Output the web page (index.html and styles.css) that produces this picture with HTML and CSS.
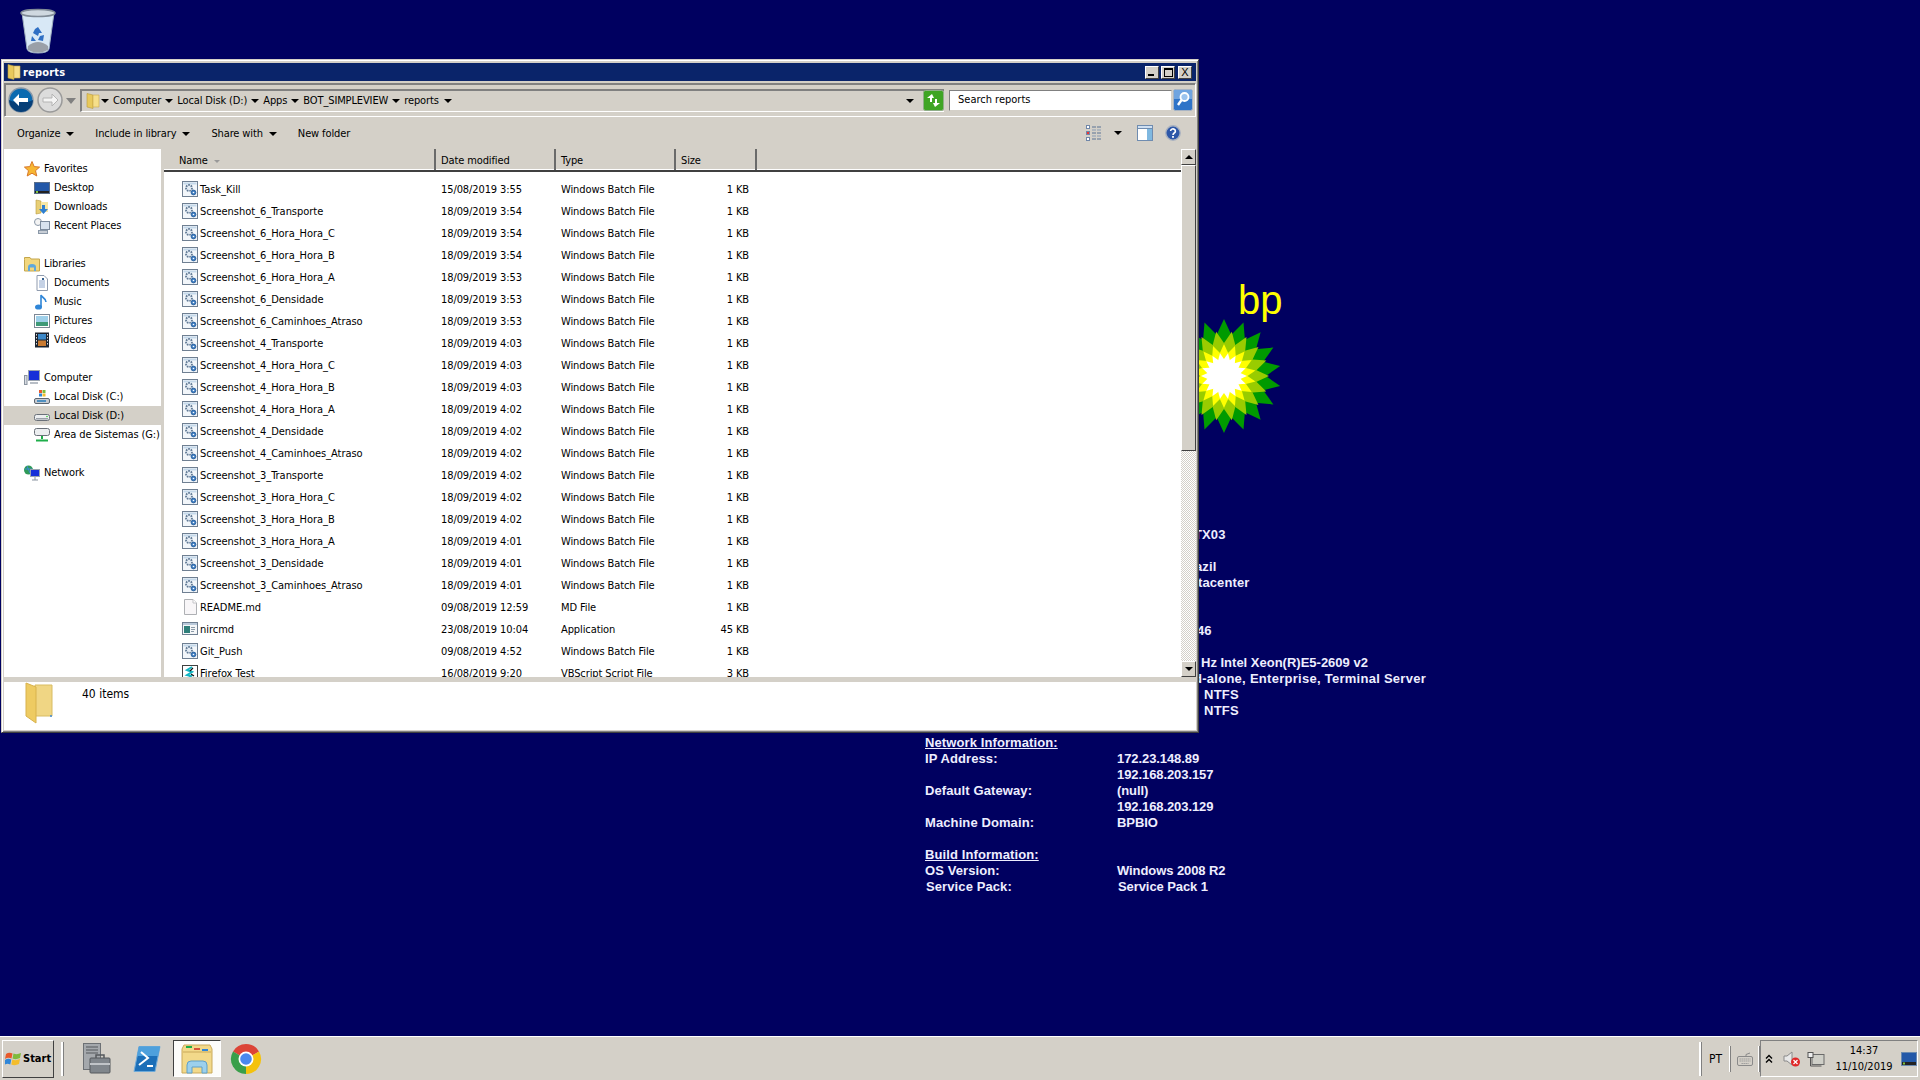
FILE: index.html
```html
<!DOCTYPE html>
<html lang="en">
<head>
    <meta charset="UTF-8">
    <title>reports</title>
    <link rel="stylesheet" href="styles.css">
</head>
<body>
    <svg class="defs" width="0" height="0">
        <defs>
            <symbol id="i-bat" viewBox="0 0 16 16">
                <rect x="0.5" y="0.5" width="15" height="15" fill="#f2f6fa" stroke="#6f7f92"/>
                <rect x="1.5" y="1.5" width="13" height="2" fill="#c4d8ea"/>
                <circle cx="7" cy="7" r="3" fill="#e4ecf4" stroke="#5f7894" stroke-width="1.8" stroke-dasharray="1.6 1"/>
                <circle cx="11.5" cy="11.5" r="2.4" fill="#3d7cc0" stroke="#1f5796" stroke-width="0.8"/>
                <circle cx="11.5" cy="11.5" r="0.8" fill="#fff"/>
            </symbol>
            <symbol id="i-doc" viewBox="0 0 16 16">
                <path d="M2.5 0.5H11L14.5 4V15.5H2.5Z" fill="#f8f6f8" stroke="#aeb0b4"/>
                <path d="M11 0.5V4H14.5" fill="#fff" stroke="#c4c4c8"/>
            </symbol>
            <symbol id="i-exe" viewBox="0 0 16 16">
                <rect x="0.5" y="1.5" width="15" height="12" fill="#f4f6f8" stroke="#6f7f92"/>
                <rect x="1" y="2" width="14" height="2" fill="#b9c9da"/>
                <rect x="2" y="5" width="6" height="7" fill="#2f7f7a"/>
                <path d="M9 6.5h4M9 8.5h4M9 10.5h3" stroke="#8b9aa8"/>
            </symbol>
            <symbol id="i-vbs" viewBox="0 0 16 16">
                <rect x="0.5" y="0.5" width="15" height="15" fill="#fff" stroke="#404040"/>
                <path d="M10 2L5 5l5 2-5 3 4 1-3 3" fill="none" stroke="#12b6c4" stroke-width="2"/>
                <path d="M11 3L8 6M9 9l3 2" stroke="#111" stroke-width="1.2"/>
            </symbol>
            <symbol id="i-folder" viewBox="0 0 16 16">
                <path d="M2 0.5L8 2V15.5L2 14Z" fill="#e8c95c" stroke="#b99b3e" stroke-width="0.6"/>
                <path d="M8 2H14V14H8Z" fill="#f6df8a" stroke="#c9a94a" stroke-width="0.6"/>
            </symbol>
            <symbol id="i-star" viewBox="0 0 16 16">
                <path d="M8 0.5L10.2 5.6 15.6 6.1 11.5 9.7 12.8 15 8 12.2 3.2 15 4.5 9.7 0.4 6.1 5.8 5.6Z" fill="#f7b733" stroke="#d8782a"/>
            </symbol>
            <symbol id="i-desk" viewBox="0 0 16 16">
                <rect x="0.5" y="2.5" width="15" height="11" fill="#2358a8" stroke="#5a6e8a"/>
                <rect x="1" y="11" width="14" height="2" fill="#222"/>
                <rect x="2" y="11" width="2" height="2" fill="#7fc241"/>
            </symbol>
            <symbol id="i-down" viewBox="0 0 16 16">
                <path d="M2 1L7 2V14L2 15Z" fill="#e8cf76" stroke="#b99b3e" stroke-width="0.6"/>
                <path d="M7 3H14V13H7Z" fill="#f6e6a6"/>
                <path d="M8 6H11V10H14L9.5 15 5 10H8Z" fill="#2f7fd0"/>
            </symbol>
            <symbol id="i-recent" viewBox="0 0 16 16">
                <circle cx="4" cy="4" r="3.5" fill="#f4f4f4" stroke="#8a98a8"/>
                <rect x="6.5" y="3.5" width="9" height="8" fill="#d8e2ee" stroke="#7c8a9c"/>
                <rect x="4.5" y="12.5" width="9" height="3" fill="#c8ced6" stroke="#8a98a8"/>
            </symbol>
            <symbol id="i-lib" viewBox="0 0 16 16">
                <path d="M0.5 3.5V1.5H6L7 3H15.5V15H0.5Z" fill="#f2d77e" stroke="#c4a64c"/>
                <path d="M4 15V11Q4 8 8 8T12 11V15H10V11.5H6V15Z" fill="#5fa8dc"/>
            </symbol>
            <symbol id="i-docs" viewBox="0 0 16 16">
                <path d="M3 0.5H10L13.5 4V15.5H3Z" fill="#fff" stroke="#8f9bae"/>
                <path d="M5 6h6M5 8h6M5 10h6M5 12h6" stroke="#8aa4cc"/>
                <rect x="8" y="3" width="2" height="2" fill="#35608f"/>
            </symbol>
            <symbol id="i-music" viewBox="0 0 16 16">
                <ellipse cx="4.5" cy="13" rx="3.5" ry="2.6" fill="#2f86d8"/>
                <path d="M7 13V1C8 4 12 4 12 8" fill="none" stroke="#2f86d8" stroke-width="1.6"/>
            </symbol>
            <symbol id="i-pics" viewBox="0 0 16 16">
                <rect x="0.5" y="1.5" width="15" height="13" fill="#fff" stroke="#7d8896"/>
                <rect x="2" y="3" width="12" height="6" fill="#9fd0ea"/>
                <rect x="2" y="9" width="12" height="4" fill="#3f9a78"/>
            </symbol>
            <symbol id="i-video" viewBox="0 0 16 16">
                <rect x="1" y="0.5" width="14" height="15" fill="#1c2430"/>
                <rect x="4" y="2" width="8" height="5.5" fill="#3c88c8"/>
                <rect x="4" y="8.5" width="8" height="5.5" fill="#c97a30"/>
                <path d="M2.5 2v12M13.5 2v12" stroke="#ddd" stroke-dasharray="1.5 1.5"/>
            </symbol>
            <symbol id="i-comp" viewBox="0 0 16 16">
                <rect x="4.5" y="0.5" width="11" height="10" fill="#1730d8" stroke="#9aa4b0"/>
                <path d="M6 12h8v2H6Z" fill="#b8bec6"/>
                <rect x="0.5" y="5.5" width="2.5" height="9" fill="#d8dce2" stroke="#8a94a0"/>
            </symbol>
            <symbol id="i-diskc" viewBox="0 0 16 16">
                <rect x="0.5" y="9.5" width="15" height="5" rx="1.5" fill="#c8ccd2" stroke="#5d6670"/>
                <rect x="3" y="11" width="9" height="2" fill="#4f8fbf"/>
                <rect x="5" y="1" width="3" height="3" fill="#e8592b"/>
                <rect x="8.5" y="1" width="3" height="3" fill="#7fba3c"/>
                <rect x="5" y="4.5" width="3" height="3" fill="#2f86d8"/>
                <rect x="8.5" y="4.5" width="3" height="3" fill="#f4bd2c"/>
            </symbol>
            <symbol id="i-diskd" viewBox="0 0 16 16">
                <rect x="0.5" y="6.5" width="15" height="6" rx="2" fill="#eceef0" stroke="#6a7078"/>
                <rect x="2" y="10" width="12" height="1.5" fill="#9aa0a8"/>
                <circle cx="13" cy="8.5" r="0.8" fill="#3c3"/>
            </symbol>
            <symbol id="i-diskg" viewBox="0 0 16 16">
                <rect x="0.5" y="1.5" width="15" height="7" rx="2" fill="#eceef0" stroke="#6a7078"/>
                <path d="M8 9v3M2 13.5h12" stroke="#1fae4a" stroke-width="2"/>
            </symbol>
            <symbol id="i-net" viewBox="0 0 16 16">
                <circle cx="4.5" cy="5" r="4.5" fill="#2f9a58"/>
                <path d="M1 4h7M3 1l3 7" stroke="#3c88d8"/>
                <rect x="6.5" y="4.5" width="9" height="7" fill="#1730d8" stroke="#9aa4b0"/>
                <path d="M11 12v3M8 15h6" stroke="#8a94a0"/>
            </symbol>
            <polygon id="bp-petal" points="0,-1 0.22,-0.52 0,0 -0.22,-0.52"/>
            <g id="bp-ring">
                <use href="#bp-petal"/>
                <use href="#bp-petal" transform="rotate(20)"/>
                <use href="#bp-petal" transform="rotate(40)"/>
                <use href="#bp-petal" transform="rotate(60)"/>
                <use href="#bp-petal" transform="rotate(80)"/>
                <use href="#bp-petal" transform="rotate(100)"/>
                <use href="#bp-petal" transform="rotate(120)"/>
                <use href="#bp-petal" transform="rotate(140)"/>
                <use href="#bp-petal" transform="rotate(160)"/>
                <use href="#bp-petal" transform="rotate(180)"/>
                <use href="#bp-petal" transform="rotate(200)"/>
                <use href="#bp-petal" transform="rotate(220)"/>
                <use href="#bp-petal" transform="rotate(240)"/>
                <use href="#bp-petal" transform="rotate(260)"/>
                <use href="#bp-petal" transform="rotate(280)"/>
                <use href="#bp-petal" transform="rotate(300)"/>
                <use href="#bp-petal" transform="rotate(320)"/>
                <use href="#bp-petal" transform="rotate(340)"/>
            </g>
        </defs>
    </svg>

    <div class="desktop">
        <!-- recycle bin -->
        <svg class="recycle" viewBox="0 0 36 46">
            <path d="M2 5L7 41Q8 45 18 45T29 41L34 5Z" fill="#d8e8f6" stroke="#9fb0c0"/>
            <ellipse cx="18" cy="5" rx="17" ry="3.5" fill="#cfd8e0" stroke="#7f8a96" stroke-width="1.5"/>
            <path d="M8 38Q18 30 28 38L28 42Q18 47 8 42Z" fill="#9aa0a8"/>
            <path d="M18 19l4 6h-3l-1 3-5-3 2-4zM24 27l-1 6-5-1 2-4zM12 28l4 5-5 0z" fill="#2f6fc4"/>
        </svg>

        <!-- bp logo -->
        <div class="bp-word">bp</div>
        <svg class="bp-logo" viewBox="-60 -60 120 120">
            <use href="#bp-ring" transform="scale(57)" fill="#009a00"/>
            <use href="#bp-ring" transform="rotate(10) scale(45)" fill="#99cc00"/>
            <use href="#bp-ring" transform="scale(32)" fill="#ffff00"/>
            <use href="#bp-ring" transform="rotate(10) scale(23)" fill="#ffffff"/>
            <circle r="11" fill="#ffffff"/>
        </svg>

        <!-- bginfo text, right column sticks out from under the window -->
        <div class="info-top">
            <div class="info-line p4">TX03</div>
            <div class="info-line"></div>
            <div class="info-line p5">azil</div>
            <div class="info-line p8">tacenter</div>
            <div class="info-line"></div>
            <div class="info-line"></div>
            <div class="info-line p7">46</div>
            <div class="info-line"></div>
            <div class="info-line p11 tight">Hz Intel Xeon(R)E5-2609 v2</div>
            <div class="info-line p4 loose">d-alone, Enterprise, Terminal Server</div>
            <div class="info-line p14 loose">NTFS</div>
            <div class="info-line p14 loose">NTFS</div>
        </div>
        <div class="info-net">
            <div class="info-head">Network Information:</div><div></div>
            <div>IP Address:</div><div class="info-val">172.23.148.89</div>
            <div></div><div class="info-val">192.168.203.157</div>
            <div>Default Gateway:</div><div class="info-val">(null)</div>
            <div></div><div class="info-val">192.168.203.129</div>
            <div>Machine Domain:</div><div class="info-val">BPBIO</div>
            <div class="info-blank"></div><div></div>
            <div class="info-head">Build Information:</div><div></div>
            <div>OS Version:</div><div class="info-val">Windows 2008 R2</div>
            <div class="nudge">Service Pack:</div><div class="nudge info-val">Service Pack 1</div>
        </div>

        <div class="window">
            <div class="titlebar">
                <svg class="icon"><use href="#i-folder"/></svg>
                <span class="title-text">reports</span>
                <div class="win-buttons">
                    <button class="win-btn"><span class="glyph-min"></span></button>
                    <button class="win-btn"><span class="glyph-max"></span></button>
                    <button class="win-btn gap"><span class="glyph-close">X</span></button>
                </div>
            </div>

            <div class="addressbar">
                <svg class="nav-round" viewBox="0 0 26 26">
                    <circle cx="13" cy="13" r="12" fill="#0a6ab0" stroke="#8a98a8" stroke-width="1.5"/>
                    <path d="M13 13a12 12 0 0 0 12 0a12 12 0 0 1-24 0a12 12 0 0 0 12 0" fill="#063f78"/>
                    <path d="M5 13l6-6v4h9v4h-9v4z" fill="#fff"/>
                </svg>
                <svg class="nav-round fwd" viewBox="0 0 26 26">
                    <circle cx="13" cy="13" r="12" fill="#dcdcdc" stroke="#9a9a9a" stroke-width="1.5"/>
                    <path d="M21 13l-6-6v4H6v4h9v4z" fill="#f4f4f4" stroke="#b4b4b4"/>
                </svg>
                <span class="hollow-arrow"></span>
                <div class="address-box">
                    <svg class="icon"><use href="#i-folder"/></svg>
                    <span class="crumb first"><i class="arrow"></i>Computer</span>
                    <span class="crumb"><i class="arrow"></i>Local Disk (D:)</span>
                    <span class="crumb"><i class="arrow"></i>Apps</span>
                    <span class="crumb"><i class="arrow"></i>BOT_SIMPLEVIEW</span>
                    <span class="crumb"><i class="arrow"></i>reports</span>
                    <i class="arrow after"></i>
                    <i class="arrow drop"></i>
                    <svg class="refresh" viewBox="0 0 21 21">
                        <rect x="0.5" y="0.5" width="20" height="20" rx="2" fill="#3fa524" stroke="#8fae88"/>
                        <path d="M9 4L4 8h3v4h2V8h2zM12 17l5-4h-3V9h-2v4h-2z" fill="#fff"/>
                    </svg>
                </div>
                <div class="search-box">Search reports</div>
                <svg class="search-btn" viewBox="0 0 20 22">
                    <rect x="0.5" y="0.5" width="19" height="21" rx="2" fill="#2f74c8" stroke="#a8b4c4"/>
                    <rect x="1" y="1" width="18" height="9" fill="#6fa4e0"/>
                    <circle cx="11.5" cy="8" r="4" fill="#9cc4ee" stroke="#fff" stroke-width="1.8"/>
                    <path d="M8.5 11L5 16" stroke="#fff" stroke-width="2.4"/>
                </svg>
            </div>

            <div class="toolbar">
                <span class="tool">Organize<i class="arrow"></i></span>
                <span class="tool">Include in library<i class="arrow"></i></span>
                <span class="tool">Share with<i class="arrow"></i></span>
                <span class="tool">New folder</span>
                <div class="tool-right">
                    <svg class="icon" viewBox="0 0 16 16">
                        <rect x="0.5" y="0.5" width="3" height="3" fill="#fff" stroke="#6f86a8"/>
                        <rect x="0.5" y="6.5" width="3" height="3" fill="#e33" stroke="#6f86a8"/>
                        <rect x="0.5" y="12.5" width="3" height="3" fill="#fff" stroke="#6f86a8"/>
                        <path d="M6 2h10M6 8h10M6 14h10" stroke="#5b7394" stroke-dasharray="4 1"/>
                        <path d="M6 5h10M6 11h10" stroke="#8a9cb4" stroke-dasharray="4 1"/>
                    </svg>
                    <i class="arrow view"></i>
                    <svg class="icon pane" viewBox="0 0 16 16">
                        <rect x="0.5" y="0.5" width="15" height="15" fill="#fff" stroke="#6f8cb0"/>
                        <rect x="0.5" y="0.5" width="15" height="3" fill="#cfe0f2" stroke="#6f8cb0"/>
                        <rect x="10" y="4" width="5" height="11" fill="#7fb8e0"/>
                    </svg>
                    <svg class="icon help" viewBox="0 0 16 16">
                        <circle cx="8" cy="8" r="7.2" fill="#2d57a8" stroke="#aab2c0" stroke-width="1.4"/>
                        <path d="M5.6 6a2.4 2.2 0 1 1 3.6 2C8.4 8.6 8 9 8 10" fill="none" stroke="#fff" stroke-width="1.6"/>
                        <rect x="7.1" y="11" width="1.8" height="1.8" fill="#fff"/>
                    </svg>
                </div>
            </div>

            <div class="main">
                <div class="nav-pane">
                    <div class="nav-group">
                        <div class="nav-item top"><svg class="icon"><use href="#i-star"/></svg>Favorites</div>
                        <div class="nav-item"><svg class="icon"><use href="#i-desk"/></svg>Desktop</div>
                        <div class="nav-item"><svg class="icon"><use href="#i-down"/></svg>Downloads</div>
                        <div class="nav-item"><svg class="icon"><use href="#i-recent"/></svg>Recent Places</div>
                    </div>
                    <div class="nav-group">
                        <div class="nav-item top"><svg class="icon"><use href="#i-lib"/></svg>Libraries</div>
                        <div class="nav-item"><svg class="icon"><use href="#i-docs"/></svg>Documents</div>
                        <div class="nav-item"><svg class="icon"><use href="#i-music"/></svg>Music</div>
                        <div class="nav-item"><svg class="icon"><use href="#i-pics"/></svg>Pictures</div>
                        <div class="nav-item"><svg class="icon"><use href="#i-video"/></svg>Videos</div>
                    </div>
                    <div class="nav-group">
                        <div class="nav-item top"><svg class="icon"><use href="#i-comp"/></svg>Computer</div>
                        <div class="nav-item"><svg class="icon"><use href="#i-diskc"/></svg>Local Disk (C:)</div>
                        <div class="nav-item selected"><svg class="icon"><use href="#i-diskd"/></svg>Local Disk (D:)</div>
                        <div class="nav-item"><svg class="icon"><use href="#i-diskg"/></svg>Area de Sistemas (G:)</div>
                    </div>
                    <div class="nav-group">
                        <div class="nav-item top"><svg class="icon"><use href="#i-net"/></svg>Network</div>
                    </div>
                </div>

                <div class="list-pane">
                    <div class="list-head">
                        <div class="col-head name">Name<i class="sort"></i></div>
                        <div class="col-head">Date modified</div>
                        <div class="col-head">Type</div>
                        <div class="col-head">Size</div>
                    </div>
                    <div class="rows">
                        <div class="row"><span class="file"><svg class="icon"><use href="#i-bat"/></svg>Task_Kill</span><span>15/08/2019 3:55</span><span>Windows Batch File</span><span class="size">1 KB</span></div>
                        <div class="row"><span class="file"><svg class="icon"><use href="#i-bat"/></svg>Screenshot_6_Transporte</span><span>18/09/2019 3:54</span><span>Windows Batch File</span><span class="size">1 KB</span></div>
                        <div class="row"><span class="file"><svg class="icon"><use href="#i-bat"/></svg>Screenshot_6_Hora_Hora_C</span><span>18/09/2019 3:54</span><span>Windows Batch File</span><span class="size">1 KB</span></div>
                        <div class="row"><span class="file"><svg class="icon"><use href="#i-bat"/></svg>Screenshot_6_Hora_Hora_B</span><span>18/09/2019 3:54</span><span>Windows Batch File</span><span class="size">1 KB</span></div>
                        <div class="row"><span class="file"><svg class="icon"><use href="#i-bat"/></svg>Screenshot_6_Hora_Hora_A</span><span>18/09/2019 3:53</span><span>Windows Batch File</span><span class="size">1 KB</span></div>
                        <div class="row"><span class="file"><svg class="icon"><use href="#i-bat"/></svg>Screenshot_6_Densidade</span><span>18/09/2019 3:53</span><span>Windows Batch File</span><span class="size">1 KB</span></div>
                        <div class="row"><span class="file"><svg class="icon"><use href="#i-bat"/></svg>Screenshot_6_Caminhoes_Atraso</span><span>18/09/2019 3:53</span><span>Windows Batch File</span><span class="size">1 KB</span></div>
                        <div class="row"><span class="file"><svg class="icon"><use href="#i-bat"/></svg>Screenshot_4_Transporte</span><span>18/09/2019 4:03</span><span>Windows Batch File</span><span class="size">1 KB</span></div>
                        <div class="row"><span class="file"><svg class="icon"><use href="#i-bat"/></svg>Screenshot_4_Hora_Hora_C</span><span>18/09/2019 4:03</span><span>Windows Batch File</span><span class="size">1 KB</span></div>
                        <div class="row"><span class="file"><svg class="icon"><use href="#i-bat"/></svg>Screenshot_4_Hora_Hora_B</span><span>18/09/2019 4:03</span><span>Windows Batch File</span><span class="size">1 KB</span></div>
                        <div class="row"><span class="file"><svg class="icon"><use href="#i-bat"/></svg>Screenshot_4_Hora_Hora_A</span><span>18/09/2019 4:02</span><span>Windows Batch File</span><span class="size">1 KB</span></div>
                        <div class="row"><span class="file"><svg class="icon"><use href="#i-bat"/></svg>Screenshot_4_Densidade</span><span>18/09/2019 4:02</span><span>Windows Batch File</span><span class="size">1 KB</span></div>
                        <div class="row"><span class="file"><svg class="icon"><use href="#i-bat"/></svg>Screenshot_4_Caminhoes_Atraso</span><span>18/09/2019 4:02</span><span>Windows Batch File</span><span class="size">1 KB</span></div>
                        <div class="row"><span class="file"><svg class="icon"><use href="#i-bat"/></svg>Screenshot_3_Transporte</span><span>18/09/2019 4:02</span><span>Windows Batch File</span><span class="size">1 KB</span></div>
                        <div class="row"><span class="file"><svg class="icon"><use href="#i-bat"/></svg>Screenshot_3_Hora_Hora_C</span><span>18/09/2019 4:02</span><span>Windows Batch File</span><span class="size">1 KB</span></div>
                        <div class="row"><span class="file"><svg class="icon"><use href="#i-bat"/></svg>Screenshot_3_Hora_Hora_B</span><span>18/09/2019 4:02</span><span>Windows Batch File</span><span class="size">1 KB</span></div>
                        <div class="row"><span class="file"><svg class="icon"><use href="#i-bat"/></svg>Screenshot_3_Hora_Hora_A</span><span>18/09/2019 4:01</span><span>Windows Batch File</span><span class="size">1 KB</span></div>
                        <div class="row"><span class="file"><svg class="icon"><use href="#i-bat"/></svg>Screenshot_3_Densidade</span><span>18/09/2019 4:01</span><span>Windows Batch File</span><span class="size">1 KB</span></div>
                        <div class="row"><span class="file"><svg class="icon"><use href="#i-bat"/></svg>Screenshot_3_Caminhoes_Atraso</span><span>18/09/2019 4:01</span><span>Windows Batch File</span><span class="size">1 KB</span></div>
                        <div class="row"><span class="file"><svg class="icon"><use href="#i-doc"/></svg>README.md</span><span>09/08/2019 12:59</span><span>MD File</span><span class="size">1 KB</span></div>
                        <div class="row"><span class="file"><svg class="icon"><use href="#i-exe"/></svg>nircmd</span><span>23/08/2019 10:04</span><span>Application</span><span class="size">45 KB</span></div>
                        <div class="row"><span class="file"><svg class="icon"><use href="#i-bat"/></svg>Git_Push</span><span>09/08/2019 4:52</span><span>Windows Batch File</span><span class="size">1 KB</span></div>
                        <div class="row"><span class="file"><svg class="icon"><use href="#i-vbs"/></svg>Firefox Test</span><span>16/08/2019 9:20</span><span>VBScript Script File</span><span class="size">3 KB</span></div>
                    </div>
                </div>

                <div class="scrollbar">
                    <div class="scroll-btn"><i class="arrow up"></i></div>
                    <div class="scroll-thumb"></div>
                    <div class="scroll-track"></div>
                    <div class="scroll-btn"><i class="arrow"></i></div>
                </div>
            </div>

            <div class="statusbar">
                <svg class="status-folder" viewBox="0 0 28 42">
                    <path d="M10 3H27V34H10Z" fill="#f0d684" stroke="#d8bc62"/>
                    <path d="M1 1L11 5V41L1 34Z" fill="#eecb62" stroke="#d8b24c"/>
                    <circle cx="26" cy="34" r="1" fill="#3c88d8"/>
                </svg>
                <span>40 items</span>
            </div>
        </div>
    </div>

    <div class="taskbar">
        <button class="start-btn">
            <svg class="start-flag" viewBox="0 0 16 16">
                <path d="M1 3Q4 1 7.5 2.5L6.5 7.5Q3 6 0 8Z" fill="#e8592b"/>
                <path d="M8.5 2.5Q12 4 16 2L15 7Q11 9 7.5 7.5Z" fill="#7fba3c"/>
                <path d="M0 9Q3 7 6.3 8.5L5.3 13.5Q2 12 -1 14Z" fill="#2f86d8"/>
                <path d="M7.3 8.5Q11 10 15 8L14 13Q10 15 6.3 13.5Z" fill="#f4bd2c"/>
            </svg>
            Start
        </button>
        <span class="task-sep"></span>
        <svg class="task-icon server" viewBox="0 0 28 32">
            <rect x="0.5" y="0.5" width="17" height="26" fill="#a4a8ac" stroke="#6c7074"/>
            <path d="M3 4h12M3 7h12M3 10h12" stroke="#55595d"/>
            <rect x="7" y="15" width="20" height="15" rx="1" fill="#80868c" stroke="#54585c"/>
            <rect x="7" y="20" width="20" height="2" fill="#c0c4c8"/>
            <path d="M13 15v-3h8v3" fill="none" stroke="#54585c" stroke-width="1.5"/>
        </svg>
        <svg class="task-icon shell" viewBox="0 0 28 26">
            <path d="M6 0.5H27L22 25.5H1Z" fill="#1c6fb8" stroke="#6faad8"/>
            <path d="M6 0.5H27L25 10H4Z" fill="#4ea0dc"/>
            <path d="M8 6l7 6-9 7" fill="none" stroke="#fff" stroke-width="2"/>
            <path d="M14 20h6" stroke="#fff" stroke-width="2"/>
        </svg>
        <div class="task-pressed">
            <svg class="task-explorer" viewBox="0 0 32 32">
                <path d="M1 6L3 2H29L31 6V30H1Z" fill="#f2d98a" stroke="#c9a95a"/>
                <rect x="5" y="3" width="6" height="2" fill="#1cae4a"/>
                <rect x="13" y="5" width="6" height="2" fill="#d8523a"/>
                <rect x="21" y="6" width="6" height="2" fill="#2f86d8"/>
                <path d="M2 9H30" stroke="#c9a95a"/>
                <path d="M6 30V22Q6 18 10 18H22Q26 18 26 22V30H21V24H11V30Z" fill="#9cd0ec" stroke="#5fa0c8"/>
            </svg>
        </div>
        <svg class="task-icon chrome" viewBox="0 0 32 32">
            <path d="M16 16L3 8.5A15 15 0 0 1 29 8.5Z" fill="#dc4437"/>
            <path d="M16 16L29 8.5A15 15 0 0 1 16 31Z" fill="#f4c20d"/>
            <path d="M16 16L16 31A15 15 0 0 1 3 8.5Z" fill="#3a9f4a"/>
            <circle cx="16" cy="16" r="7.5" fill="#fff"/>
            <circle cx="16" cy="16" r="5.8" fill="#4a88ee"/>
        </svg>
        <div class="task-spacer"></div>
        <span class="task-sep"></span>
        <span class="lang">PT</span>
        <span class="task-sep thin"></span>
        <svg class="keyboard" viewBox="0 0 16 14">
            <rect x="0.5" y="4.5" width="15" height="9" rx="1.5" fill="#d4d0c8" stroke="#8a8a8a"/>
            <path d="M2.5 7h11M2.5 9h11M4.5 11.5h7" stroke="#9a9a9a" stroke-dasharray="1.4 0.6"/>
            <path d="M9 4.5V2.5L13 1" fill="none" stroke="#8a8a8a"/>
        </svg>
        <span class="task-sep thin"></span>
        <div class="tray">
            <svg class="chevrons" viewBox="0 0 8 10">
                <path d="M1 4.5L4 1.5 7 4.5M1 8.5L4 5.5 7 8.5" fill="none" stroke="#000" stroke-width="1.4"/>
            </svg>
            <svg class="tray-icon" viewBox="0 0 18 16">
                <path d="M1 5H4L9 1V14L4 10H1Z" fill="#e8e8e8" stroke="#8a8a8a"/>
                <circle cx="12.5" cy="11" r="4.5" fill="#e02828"/>
                <path d="M10.5 9l4 4M14.5 9l-4 4" stroke="#fff" stroke-width="1.2"/>
            </svg>
            <svg class="tray-icon net" viewBox="0 0 17 16">
                <rect x="4.5" y="3.5" width="12" height="10" fill="#cfcfc8" stroke="#6a6a6a"/>
                <rect x="0.5" y="1.5" width="5" height="5" fill="#eee" stroke="#555"/>
                <path d="M3 6.5V15H14" fill="none" stroke="#555"/>
            </svg>
            <div class="clock"><div>14:37</div><div>11/10/2019</div></div>
            <svg class="show-desktop" viewBox="0 0 16 14">
                <rect x="0.5" y="0.5" width="15" height="13" fill="#2358a8" stroke="#6a8ab0"/>
                <rect x="1" y="10" width="14" height="3" fill="#222"/>
                <rect x="2" y="10.5" width="2" height="2" fill="#7fc241"/>
            </svg>
        </div>
    </div>
</body>
</html>
```

FILE: styles.css
```css
/* Page */
* {
    box-sizing: border-box;
}

body {
    margin: 0;
    height: 100vh;
    overflow: hidden;
    display: flex;
    flex-direction: column;
    font-family: "DejaVu Sans", sans-serif;
    font-stretch: condensed;
    font-size: 11px;
    color: #000;
    background: #000060;
}

.defs {
    position: absolute;
}

.icon {
    width: 16px;
    height: 16px;
    flex: none;
}

.arrow {
    display: inline-block;
    width: 0;
    height: 0;
    border-left: 4px solid transparent;
    border-right: 4px solid transparent;
    border-top: 4px solid #000;
}

/* Desktop items */
.desktop {
    position: relative;
    height: 1036px;
    flex: none;
}

.recycle {
    position: absolute;
    left: 20px;
    top: 8px;
    width: 36px;
    height: 46px;
}

.bp-word {
    position: absolute;
    left: 1238px;
    top: 277px;
    font-family: "Liberation Sans", sans-serif;
    font-stretch: normal;
    font-size: 40px;
    line-height: 46px;
    color: #ffff00;
}

.bp-logo {
    position: absolute;
    left: 1164px;
    top: 316px;
    width: 120px;
    height: 120px;
}

.info-top, .info-net {
    position: absolute;
    font-family: "Liberation Sans", sans-serif;
    font-stretch: normal;
    font-weight: bold;
    font-size: 13px;
    line-height: 16px;
    letter-spacing: 0.1px;
    color: #eeeeff;
}

.info-top {
    left: 1190px;
    top: 527px;
}

.info-line {
    height: 16px;
    white-space: nowrap;
}

.p4 { padding-left: 4px; }
.p5 { padding-left: 5px; }
.p7 { padding-left: 7px; }
.p8 { padding-left: 8px; }
.p11 { padding-left: 11px; }
.p14 { padding-left: 14px; }

.tight {
    letter-spacing: 0;
}

.loose {
    letter-spacing: 0.27px;
}

.info-net {
    left: 925px;
    top: 735px;
    display: grid;
    grid-template-columns: 192px auto;
    grid-auto-rows: 16px;
}

.info-head {
    text-decoration: underline;
}

.info-val {
    letter-spacing: -0.08px;
}

.nudge {
    margin-left: 1px;
}

/* Explorer window */
.window {
    position: absolute;
    left: 1px;
    top: 59px;
    width: 1198px;
    height: 674px;
    padding: 3px 2px 2px;
    display: flex;
    flex-direction: column;
    background: #d4d0c8;
    border: 1px solid;
    border-color: #d4d0c8 #404040 #404040 #d4d0c8;
    box-shadow: inset 1px 1px 0 #fff, inset -1px -1px 0 #808080;
}

.titlebar {
    height: 18px;
    flex: none;
    display: flex;
    align-items: center;
    padding: 0 4px 0 2px;
    background: #0a246a;
    color: #fff;
}

.title-text {
    margin-left: 1px;
    font-weight: bold;
    letter-spacing: 0.2px;
}

.win-buttons {
    margin-left: auto;
    display: flex;
    gap: 2px;
}

.win-btn {
    width: 14px;
    height: 13px;
    padding: 0;
    display: flex;
    align-items: center;
    justify-content: center;
    background: #d4d0c8;
    border: 1px solid;
    border-color: #fff #404040 #404040 #fff;
}

.win-btn.gap {
    margin-left: 1px;
}

.glyph-min {
    width: 6px;
    height: 2px;
    margin-top: 6px;
    margin-right: 2px;
    background: #000;
}

.glyph-max {
    width: 9px;
    height: 9px;
    border: 1px solid #000;
    border-top-width: 2px;
}

.glyph-close {
    font-family: "Liberation Sans", sans-serif;
    font-size: 11px;
    line-height: 11px;
    color: #000;
}

/* Address row */
.addressbar {
    height: 34px;
    margin-top: 2px;
    flex: none;
    display: flex;
    align-items: center;
    padding-left: 3px;
    border: 1px solid #808080;
    border-right-color: #fff;
    border-bottom-color: #fff;
    box-shadow: 1px 1px 0 #808080 inset;
}

.nav-round {
    width: 26px;
    height: 26px;
    flex: none;
}

.nav-round.fwd {
    margin-left: 3px;
}

.hollow-arrow {
    width: 0;
    height: 0;
    margin: 2px 4px 0 3px;
    border-left: 5px solid transparent;
    border-right: 5px solid transparent;
    border-top: 6px solid #808080;
}

.address-box {
    width: 864px;
    height: 23px;
    flex: none;
    display: flex;
    align-items: center;
    padding-left: 3px;
    border-top: 2px solid #808080;
    border-left: 2px solid #808080;
    border-bottom: 1px solid #fff;
}

.crumb {
    margin-left: 4px;
    white-space: nowrap;
    letter-spacing: -0.12px;
}

.crumb.first {
    margin-left: 0;
}

.crumb .arrow {
    margin-right: 4px;
    vertical-align: 1px;
}

.arrow.after {
    margin-left: 5px;
}

.arrow.drop {
    margin-left: auto;
}

.refresh {
    width: 21px;
    height: 21px;
    margin-left: 9px;
    flex: none;
}

.search-box {
    width: 223px;
    height: 21px;
    margin-left: 5px;
    padding-left: 8px;
    line-height: 18px;
    flex: none;
    background: #fff;
    border: 1px solid #d4d0c8;
    border-top-color: #808080;
    border-left-color: #808080;
}

.search-btn {
    width: 20px;
    height: 22px;
    margin-left: 1px;
    flex: none;
}

/* Command row */
.toolbar {
    height: 32px;
    flex: none;
    display: flex;
    align-items: center;
    padding-left: 13px;
    gap: 21px;
}

.tool {
    white-space: nowrap;
    letter-spacing: -0.12px;
}

.tool .arrow {
    margin-left: 6px;
    vertical-align: 1px;
}

.tool-right {
    margin-left: auto;
    margin-right: 15px;
    display: flex;
    align-items: center;
}

.arrow.view {
    margin-left: 12px;
}

.icon.pane {
    margin-left: 15px;
}

.icon.help {
    margin-left: 12px;
}

/* Panes */
.main {
    height: 528px;
    flex: none;
    display: flex;
    overflow: hidden;
}

.nav-pane {
    width: 157px;
    flex: none;
    padding-top: 10px;
    background: #fff;
    white-space: nowrap;
    letter-spacing: -0.12px;
}

.nav-group {
    margin-bottom: 19px;
}

.nav-item {
    height: 19px;
    display: flex;
    align-items: center;
    gap: 4px;
    padding-left: 30px;
}

.nav-item.top {
    padding-left: 20px;
}

.nav-item.selected {
    background: #d4d0c8;
}

.list-pane {
    width: 1017px;
    margin-left: 3px;
    flex: none;
    display: flex;
    flex-direction: column;
    background: #fff;
}

.list-head {
    height: 22px;
    flex: none;
    display: grid;
    grid-template-columns: 272px 120px 120px 81px;
    background: #d4d0c8;
    box-shadow: 0 1px 0 #404040, 0 -1px 0 #fff inset;
    border-bottom: 1px solid #404040;
}

.col-head {
    padding: 3px 0 0 5px;
    line-height: 17px;
    letter-spacing: -0.12px;
    border-right: 2px solid #6a6a6a;
}

.col-head.name {
    padding-left: 15px;
}

.sort {
    display: inline-block;
    margin-left: 6px;
    vertical-align: 1px;
    border-left: 3px solid transparent;
    border-right: 3px solid transparent;
    border-top: 3px solid #999;
}

.rows {
    padding-top: 7px;
}

.row {
    height: 22px;
    display: grid;
    grid-template-columns: 271px 120px 120px 81px;
    align-items: center;
}

.row > span {
    padding-left: 6px;
    white-space: nowrap;
    letter-spacing: -0.1px;
}

.row > .file {
    display: flex;
    align-items: center;
    gap: 2px;
    padding-left: 18px;
    letter-spacing: -0.03px;
}

.row > .size {
    padding: 0 7px 0 0;
    text-align: right;
}

/* Scrollbar */
.scrollbar {
    width: 15px;
    flex: none;
    display: flex;
    flex-direction: column;
}

.scroll-btn {
    height: 16px;
    flex: none;
    display: flex;
    align-items: center;
    justify-content: center;
    background: #d4d0c8;
    border: 1px solid;
    border-color: #fff #404040 #404040 #fff;
}

.arrow.up {
    border-top: 0;
    border-bottom: 4px solid #000;
}

.scroll-thumb {
    height: 286px;
    flex: none;
    background: #d4d0c8;
    border: 1px solid;
    border-color: #fff #404040 #404040 #fff;
}

.scroll-track {
    flex: 1;
    background: repeating-conic-gradient(#fff 0 25%, #d4d0c8 0 50%) 0 0 / 2px 2px;
}

/* Status */
.statusbar {
    height: 48px;
    margin-top: 5px;
    flex: none;
    display: flex;
    padding-left: 21px;
    background: #fff;
}

.status-folder {
    width: 28px;
    height: 42px;
    flex: none;
}

.statusbar span {
    margin-left: 29px;
    margin-top: 5px;
    font-size: 12px;
}

/* Taskbar */
.taskbar {
    height: 44px;
    flex: none;
    display: flex;
    align-items: center;
    padding: 0 2px 0 2px;
    background: #d4d0c8;
    border-top: 1px solid #fff;
}

.start-btn {
    width: 52px;
    height: 38px;
    padding: 0 0 0 2px;
    display: flex;
    align-items: center;
    gap: 2px;
    font-family: "DejaVu Sans", sans-serif;
    font-stretch: condensed;
    font-weight: bold;
    font-size: 11px;
    background: #d4d0c8;
    border: 1px solid;
    border-color: #fff #404040 #404040 #fff;
}

.start-flag {
    width: 16px;
    height: 16px;
    flex: none;
}

.task-sep {
    width: 3px;
    height: 34px;
    margin-left: 7px;
    flex: none;
    background: #fff;
    border-right: 1px solid #808080;
}

.task-sep.thin {
    width: 2px;
    height: 26px;
    margin-left: 5px;
}

.task-icon {
    flex: none;
}

.task-icon.server {
    width: 28px;
    height: 32px;
    margin-left: 19px;
}

.task-icon.shell {
    width: 28px;
    height: 26px;
    margin-left: 22px;
}

.task-pressed {
    width: 48px;
    height: 37px;
    margin-left: 12px;
    flex: none;
    display: flex;
    align-items: center;
    justify-content: center;
    background: #fcfcfa;
    border: 1px solid;
    border-color: #404040 #fff #fff #404040;
}

.task-explorer {
    width: 32px;
    height: 32px;
}

.task-icon.chrome {
    width: 32px;
    height: 32px;
    margin-left: 9px;
}

.task-spacer {
    flex: 1;
}

.lang {
    margin-left: 7px;
    width: 15px;
    font-size: 12px;
    white-space: nowrap;
}

.keyboard {
    width: 16px;
    height: 14px;
    margin-left: 6px;
    flex: none;
}

.tray {
    width: 158px;
    height: 37px;
    flex: none;
    display: flex;
    align-items: center;
    padding-left: 4px;
    border: 1px solid;
    border-color: #808080 #fff #fff #808080;
}

.chevrons {
    width: 8px;
    height: 10px;
    flex: none;
}

.tray-icon {
    width: 18px;
    height: 16px;
    margin-left: 10px;
    flex: none;
}

.tray-icon.net {
    margin-left: 6px;
}

.clock {
    width: 64px;
    margin-left: 7px;
    font-size: 11px;
    line-height: 16px;
    text-align: center;
}

.show-desktop {
    width: 16px;
    height: 14px;
    margin-left: 5px;
    flex: none;
}
```
